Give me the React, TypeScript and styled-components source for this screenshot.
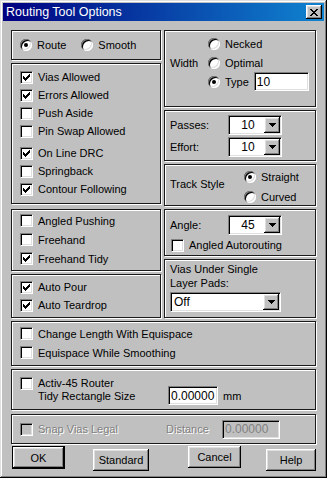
import React from "react";
import styled, { createGlobalStyle } from "styled-components";

const GlobalStyle = createGlobalStyle`
  html, body { margin: 0; padding: 0; }
  body {
    background: #c0c0c0;
    font-family: "Liberation Sans", Arial, sans-serif;
    font-size: 11px;
    color: #000;
  }
  * { box-sizing: border-box; }
`;

const raised = `
  box-shadow: inset -1px -1px 0 #000, inset 1px 1px 0 #fff,
    inset -2px -2px 0 #808080, inset 2px 2px 0 #dfdfdf;
`;

const sunken = `
  border: 1px solid;
  border-color: #808080 #fff #fff #808080;
  box-shadow: inset 1px 1px 0 #000, inset -1px -1px 0 #dfdfdf;
`;

const Window = styled.div`
  width: 327px;
  height: 478px;
  padding: 3px;
  background: #c0c0c0;
  overflow: hidden;
  box-shadow: inset -1px -1px 0 #000, inset 1px 1px 0 #dfdfdf,
    inset -2px -2px 0 #808080, inset 2px 2px 0 #fff;
`;

const TitleBar = styled.div`
  height: 18px;
  display: flex;
  align-items: center;
  justify-content: space-between;
  padding: 0 2px 0 3px;
  background: linear-gradient(to right, #000080, #1084d0);
  color: #fff;
  font-size: 12.5px;
`;

const CloseButton = styled.div`
  width: 16px;
  height: 14px;
  display: flex;
  align-items: center;
  justify-content: center;
  background: #c0c0c0;
  ${raised}
`;

const Body = styled.div`
  padding: 9px 8px 0 8px;
`;

const Columns = styled.div`
  display: grid;
  grid-template-columns: 150px 152px;
  column-gap: 3px;
`;

const Column = styled.div`
  display: flex;
  flex-direction: column;
`;

const Panel = styled.div<{ $h: number; $mt?: number; $pt?: number; $pl: number; $row?: boolean }>`
  height: ${(p) => p.$h}px;
  margin-top: ${(p) => p.$mt ?? 0}px;
  padding: ${(p) => p.$pt ?? 0}px 4px 0 ${(p) => p.$pl}px;
  border: 1px solid #1a1a1a;
  box-shadow: inset 1px 1px 0 #fff, 1px 1px 0 #fff;
  display: flex;
  flex-direction: ${(p) => (p.$row ? "row" : "column")};
  align-items: ${(p) => (p.$row ? "center" : "stretch")};
`;

const Option = styled.label<{ $h?: number; $mt?: number; $ml?: number; $w?: number; $off?: boolean }>`
  display: flex;
  align-items: center;
  gap: 5px;
  height: ${(p) => (p.$h ? `${p.$h}px` : "auto")};
  width: ${(p) => (p.$w ? `${p.$w}px` : "auto")};
  margin-top: ${(p) => p.$mt ?? 0}px;
  margin-left: ${(p) => p.$ml ?? 0}px;
  white-space: nowrap;
  color: ${(p) => (p.$off ? "#808080" : "#000")};
  text-shadow: ${(p) => (p.$off ? "1px 1px 0 #fff" : "none")};
`;

const Box = styled.span<{ $off?: boolean }>`
  width: 13px;
  height: 13px;
  flex: none;
  display: inline-flex;
  align-items: center;
  justify-content: center;
  background: ${(p) => (p.$off ? "#c0c0c0" : "#fff")};
  ${sunken}
`;

const RadioDot = styled.span<{ $on?: boolean }>`
  width: 12px;
  height: 12px;
  flex: none;
  border-radius: 50%;
  background: #fff;
  display: inline-flex;
  align-items: center;
  justify-content: center;
  box-shadow: inset 1px 1px 0 #808080, inset -1px -1px 0 #fff,
    inset 2px 2px 0 #000, inset -2px -2px 0 #dfdfdf;
  &::after {
    content: "";
    width: 4px;
    height: 4px;
    border-radius: 50%;
    background: #000;
    display: ${(p) => (p.$on ? "block" : "none")};
  }
`;

const FieldLabel = styled.span<{ $w: number; $mb?: number; $off?: boolean }>`
  width: ${(p) => p.$w}px;
  flex: none;
  margin-bottom: ${(p) => p.$mb ?? 0}px;
  white-space: nowrap;
  color: ${(p) => (p.$off ? "#808080" : "#000")};
  text-shadow: ${(p) => (p.$off ? "1px 1px 0 #fff" : "none")};
`;

const FormRow = styled.div<{ $h: number; $mt?: number; $pl?: number }>`
  display: flex;
  align-items: center;
  height: ${(p) => p.$h}px;
  margin-top: ${(p) => p.$mt ?? 0}px;
  padding-left: ${(p) => p.$pl ?? 0}px;
`;

const Group = styled.div`
  display: flex;
  align-items: center;
`;

const Stack = styled.div`
  display: flex;
  flex-direction: column;
`;

const Field = styled.input<{ $w: number; $ml?: number; $off?: boolean }>`
  width: ${(p) => p.$w}px;
  height: 19px;
  margin: 0 0 0 ${(p) => p.$ml ?? 0}px;
  padding: 0 0 0 2px;
  font-family: "Liberation Sans", Arial, sans-serif;
  font-size: 12px;
  outline: none;
  background: ${(p) => (p.$off ? "#c0c0c0" : "#fff")};
  color: ${(p) => (p.$off ? "#808080" : "#000")};
  ${sunken}
`;

const Combo = styled.div<{ $w: number; $mt?: number }>`
  width: ${(p) => p.$w}px;
  height: 20px;
  margin-top: ${(p) => p.$mt ?? 0}px;
  padding: 1px;
  display: flex;
  align-items: center;
  background: #fff;
  ${sunken}
`;

const ComboText = styled.span<{ $center?: boolean }>`
  flex: 1;
  padding-left: 2px;
  text-align: ${(p) => (p.$center ? "center" : "left")};
  font-size: 12px;
`;

const ComboArrow = styled.span`
  width: 16px;
  height: 16px;
  flex: none;
  display: flex;
  align-items: center;
  justify-content: center;
  background: #c0c0c0;
  ${raised}
`;

const Caption = styled.div`
  line-height: 14px;
`;

const Unit = styled.span`
  margin-left: 5px;
`;

const ButtonRow = styled.div`
  display: flex;
  align-items: flex-start;
  margin-top: 2px;
`;

const Button = styled.div<{ $w: number; $h: number; $mt?: number; $ml: number; $default?: boolean }>`
  width: ${(p) => p.$w}px;
  height: ${(p) => p.$h}px;
  margin-top: ${(p) => p.$mt ?? 0}px;
  margin-left: ${(p) => p.$ml}px;
  display: flex;
  align-items: center;
  justify-content: center;
  background: #c0c0c0;
  border: ${(p) => (p.$default ? "1px solid #000" : "none")};
  ${raised}
`;

function Check({ off }: { off?: boolean }) {
  return (
    <svg width="7" height="7" viewBox="0 0 7 7" shapeRendering="crispEdges">
      <path
        d="M0 2h1v3h-1zM1 3h1v3h-1zM2 4h1v3h-1zM3 3h1v3h-1zM4 2h1v3h-1zM5 1h1v3h-1zM6 0h1v3h-1z"
        fill={off ? "#808080" : "#000"}
      />
    </svg>
  );
}

function CheckOption(props: {
  label: string;
  checked?: boolean;
  h?: number;
  mt?: number;
  ml?: number;
  w?: number;
  off?: boolean;
}) {
  return (
    <Option $h={props.h} $mt={props.mt} $ml={props.ml} $w={props.w} $off={props.off}>
      <Box $off={props.off}>{props.checked && <Check off={props.off} />}</Box>
      {props.label}
    </Option>
  );
}

function RadioOption(props: { label: string; on?: boolean; h?: number; ml?: number; children?: React.ReactNode }) {
  return (
    <Option $h={props.h} $ml={props.ml}>
      <RadioDot $on={props.on} />
      {props.label}
      {props.children}
    </Option>
  );
}

function Arrow() {
  return (
    <svg width="7" height="4" viewBox="0 0 7 4" shapeRendering="crispEdges">
      <path d="M0 0h7v1h-7zM1 1h5v1h-5zM2 2h3v1h-3zM3 3h1v1h-1z" fill="#000" />
    </svg>
  );
}

function Dropdown({ w, value, center, mt }: { w: number; value: string; center?: boolean; mt?: number }) {
  return (
    <Combo $w={w} $mt={mt}>
      <ComboText $center={center}>{value}</ComboText>
      <ComboArrow>
        <Arrow />
      </ComboArrow>
    </Combo>
  );
}

export default function App() {
  return (
    <>
      <GlobalStyle />
      <Window>
        <TitleBar>
          <span>Routing Tool Options</span>
          <CloseButton>
            <svg width="8" height="7" viewBox="0 0 8 7" shapeRendering="crispEdges">
              <path
                d="M0 0h2v1h-2zM6 0h2v1h-2zM1 1h2v1h-2zM5 1h2v1h-2zM2 2h4v1h-4zM3 3h2v1h-2zM2 4h4v1h-4zM1 5h2v1h-2zM5 5h2v1h-2zM0 6h2v1h-2zM6 6h2v1h-2z"
                fill="#000"
              />
            </svg>
          </CloseButton>
        </TitleBar>

        <Body>
          <Columns>
            <Column>
              <Panel $h={30} $pl={8} $row>
                <RadioOption label="Route" on />
                <RadioOption label="Smooth" ml={15} />
              </Panel>

              <Panel $h={141} $mt={3} $pt={4} $pl={8}>
                <CheckOption label="Vias Allowed" checked h={18} />
                <CheckOption label="Errors Allowed" checked h={18} />
                <CheckOption label="Push Aside" h={18} />
                <CheckOption label="Pin Swap Allowed" h={18} />
                <CheckOption label="On Line DRC" checked h={18} mt={4} />
                <CheckOption label="Springback" h={18} />
                <CheckOption label="Contour Following" checked h={18} />
              </Panel>

              <Panel $h={62} $mt={5} $pt={1} $pl={8}>
                <CheckOption label="Angled Pushing" h={19} />
                <CheckOption label="Freehand" h={19} />
                <CheckOption label="Freehand Tidy" checked h={19} />
              </Panel>

              <Panel $h={44} $mt={3} $pt={3} $pl={8}>
                <CheckOption label="Auto Pour" checked h={18} />
                <CheckOption label="Auto Teardrop" checked h={18} />
              </Panel>
            </Column>

            <Column>
              <Panel $h={77} $pt={3} $pl={5}>
                <Group>
                  <FieldLabel $w={38}>Width</FieldLabel>
                  <Stack>
                    <RadioOption label="Necked" h={19} />
                    <RadioOption label="Optimal" h={19} />
                    <RadioOption label="Type" on h={19}>
                      <Field $w={55} defaultValue="10" />
                    </RadioOption>
                  </Stack>
                </Group>
              </Panel>

              <Panel $h={51} $mt={3} $pt={4} $pl={5}>
                <FormRow $h={20}>
                  <FieldLabel $w={58}>Passes:</FieldLabel>
                  <Dropdown w={54} value="10" center />
                </FormRow>
                <FormRow $h={20} $mt={2}>
                  <FieldLabel $w={58}>Effort:</FieldLabel>
                  <Dropdown w={54} value="10" center />
                </FormRow>
              </Panel>

              <Panel $h={42} $mt={3} $pt={2} $pl={5}>
                <Group>
                  <FieldLabel $w={74} $mb={6}>
                    Track Style
                  </FieldLabel>
                  <Stack>
                    <RadioOption label="Straight" on h={20} />
                    <RadioOption label="Curved" h={20} />
                  </Stack>
                </Group>
              </Panel>

              <Panel $h={47} $mt={3} $pt={5} $pl={5}>
                <FormRow $h={20}>
                  <FieldLabel $w={58}>Angle:</FieldLabel>
                  <Dropdown w={54} value="45" center />
                </FormRow>
                <CheckOption label="Angled Autorouting" h={18} mt={1} ml={1} />
              </Panel>

              <Panel $h={59} $mt={3} $pt={2} $pl={5}>
                <Caption>
                  Vias Under Single
                  <br />
                  Layer Pads:
                </Caption>
                <Dropdown w={111} value="Off" mt={2} />
              </Panel>
            </Column>
          </Columns>

          <Panel $h={45} $mt={3} $pt={2} $pl={8}>
            <CheckOption label="Change Length With Equispace" h={19} />
            <CheckOption label="Equispace While Smoothing" h={19} />
          </Panel>

          <Panel $h={41} $mt={3} $pt={5} $pl={8}>
            <CheckOption label="Activ-45 Router" h={16} />
            <FormRow $h={19} $mt={-5} $pl={18}>
              <FieldLabel $w={130}>Tidy Rectangle Size</FieldLabel>
              <Field $w={50} defaultValue="0.00000" />
              <Unit>mm</Unit>
            </FormRow>
          </Panel>

          <Panel $h={30} $mt={4} $pl={8} $row>
            <CheckOption label="Snap Vias Legal" w={146} off />
            <FieldLabel $w={56} $off>
              Distance
            </FieldLabel>
            <Field $w={58} defaultValue="0.00000" $off readOnly />
          </Panel>

          <ButtonRow>
            <Button $w={53} $h={23} $ml={1} $default>
              OK
            </Button>
            <Button $w={56} $h={22} $mt={3} $ml={28}>
              Standard
            </Button>
            <Button $w={53} $h={22} $ml={39}>
              Cancel
            </Button>
            <Button $w={50} $h={22} $mt={3} $ml={25}>
              Help
            </Button>
          </ButtonRow>
        </Body>
      </Window>
    </>
  );
}
